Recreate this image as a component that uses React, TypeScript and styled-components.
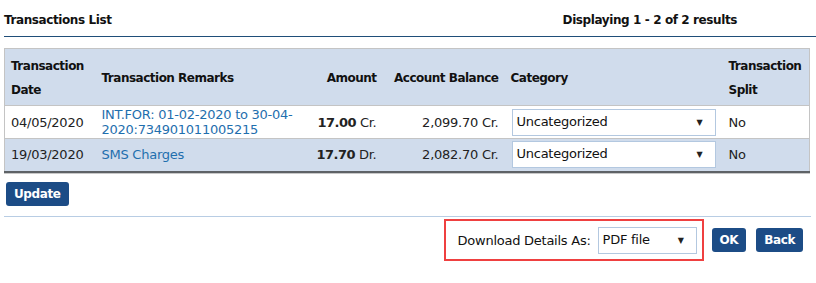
import * as React from "react";
import styled, { createGlobalStyle } from "styled-components";

const GlobalStyle = createGlobalStyle`
  body {
    margin: 0;
    background: #ffffff;
    font-family: "DejaVu Sans", Verdana, sans-serif;
    font-size: 13px;
    letter-spacing: -0.25px;
    color: #222;
  }
`;

const Page = styled.div`
  padding: 10px 0 0 4px;
  width: 812px;
`;

const TitleBar = styled.div`
  display: flex;
  justify-content: space-between;
  align-items: center;
  height: 20px;
  padding-right: 79px;
  border-bottom: 1px solid #1f4e79;
  padding-bottom: 6px;
  font-weight: bold;
  font-size: 12px;
  letter-spacing: -0.4px;
  color: #111;
`;

const Table = styled.table`
  margin-top: 11px;
  width: 805px;
  border-collapse: collapse;
  table-layout: fixed;
  border: 1px solid #c4c4c4;
  border-bottom: 2px solid #5e6266;
  box-shadow: 0 1px 0 #c8c8c8;
`;

const HeadCell = styled.th<{ $align?: "left" | "right" }>`
  background: #d0dcec;
  text-align: ${(p) => p.$align ?? "left"};
  font-weight: bold;
  font-size: 12px;
  letter-spacing: -0.5px;
  line-height: 24px;
  padding: 5px 6px 3px 6px;
  color: #111;
  vertical-align: middle;
  white-space: nowrap;
`;

const WrapHead = styled(HeadCell)`
  white-space: normal;
`;

const Row = styled.tr<{ $alt?: boolean }>`
  background: ${(p) => (p.$alt ? "#d0dcec" : "#ffffff")};
  border-top: 1px solid #c4c4c4;
  height: 33px;
`;

const Cell = styled.td<{ $align?: "left" | "right" }>`
  text-align: ${(p) => p.$align ?? "left"};
  padding: 0 6px;
  line-height: 15px;
  color: #222;
  vertical-align: middle;
`;

const CategoryCell = styled(Cell)`
  padding: 0 0 0 7px;
`;

const RemarkLink = styled.a`
  color: #1f6fae;
  text-decoration: none;
`;

const Bold = styled.b`
  font-weight: bold;
  letter-spacing: -0.5px;
`;

const SelectBox = styled.div<{ $w: number }>`
  display: flex;
  align-items: center;
  justify-content: space-between;
  box-sizing: border-box;
  width: ${(p) => p.$w}px;
  height: 27px;
  border: 1px solid #b3c8e0;
  background: #fff;
  padding: 0 12px 2px 4px;
  color: #111;
`;

const Arrow = styled.span`
  font-size: 8px;
  color: #222;
  padding-top: 2px;
`;

const Button = styled.button<{ $gap?: number }>`
  background: #1c4c86;
  color: #fff;
  font-family: inherit;
  font-weight: bold;
  font-size: 12px;
  letter-spacing: -0.4px;
  border: none;
  border-radius: 3px;
  height: 24px;
  padding: 0 8px;
  margin-left: ${(p) => p.$gap ?? 0}px;
  cursor: pointer;
`;

const UpdateBar = styled.div`
  padding: 9px 0 10px 2px;
  width: 805px;
  border-bottom: 1px solid #b8cde4;
`;

const Footer = styled.div`
  display: flex;
  align-items: center;
  justify-content: flex-end;
  padding: 2px 13px 0 0;
`;

const DownloadBox = styled.div`
  display: flex;
  align-items: center;
  gap: 7px;
  border: 2px solid #ef4040;
  padding: 6px 5px 5px 12px;
  color: #111;
`;

const Category = () => (
  <SelectBox $w={204}>
    <span>Uncategorized</span>
    <Arrow>▼</Arrow>
  </SelectBox>
);

export default function App() {
  return (
    <Page>
      <GlobalStyle />
      <TitleBar>
        <span>Transactions List</span>
        <span>Displaying 1 - 2 of 2 results</span>
      </TitleBar>
      <Table>
        <colgroup>
          <col style={{ width: 91 }} />
          <col style={{ width: 212 }} />
          <col style={{ width: 75 }} />
          <col style={{ width: 122 }} />
          <col style={{ width: 218 }} />
          <col style={{ width: 87 }} />
        </colgroup>
        <thead>
          <tr>
            <WrapHead>Transaction Date</WrapHead>
            <HeadCell>Transaction Remarks</HeadCell>
            <HeadCell $align="right">Amount</HeadCell>
            <HeadCell $align="right">Account Balance</HeadCell>
            <HeadCell>Category</HeadCell>
            <WrapHead>Transaction Split</WrapHead>
          </tr>
        </thead>
        <tbody>
          <Row>
            <Cell>04/05/2020</Cell>
            <Cell>
              <RemarkLink>INT.FOR: 01-02-2020 to 30-04-2020:734901011005215</RemarkLink>
            </Cell>
            <Cell $align="right">
              <Bold>17.00</Bold> Cr.
            </Cell>
            <Cell $align="right">2,099.70 Cr.</Cell>
            <CategoryCell>
              <Category />
            </CategoryCell>
            <Cell>No</Cell>
          </Row>
          <Row $alt>
            <Cell>19/03/2020</Cell>
            <Cell>
              <RemarkLink>SMS Charges</RemarkLink>
            </Cell>
            <Cell $align="right">
              <Bold>17.70</Bold> Dr.
            </Cell>
            <Cell $align="right">2,082.70 Cr.</Cell>
            <CategoryCell>
              <Category />
            </CategoryCell>
            <Cell>No</Cell>
          </Row>
        </tbody>
      </Table>
      <UpdateBar>
        <Button>Update</Button>
      </UpdateBar>
      <Footer>
        <DownloadBox>
          <span>Download Details As:</span>
          <SelectBox $w={99}>
            <span>PDF file</span>
            <Arrow>▼</Arrow>
          </SelectBox>
        </DownloadBox>
        <Button $gap={8}>OK</Button>
        <Button $gap={10}>Back</Button>
      </Footer>
    </Page>
  );
}
